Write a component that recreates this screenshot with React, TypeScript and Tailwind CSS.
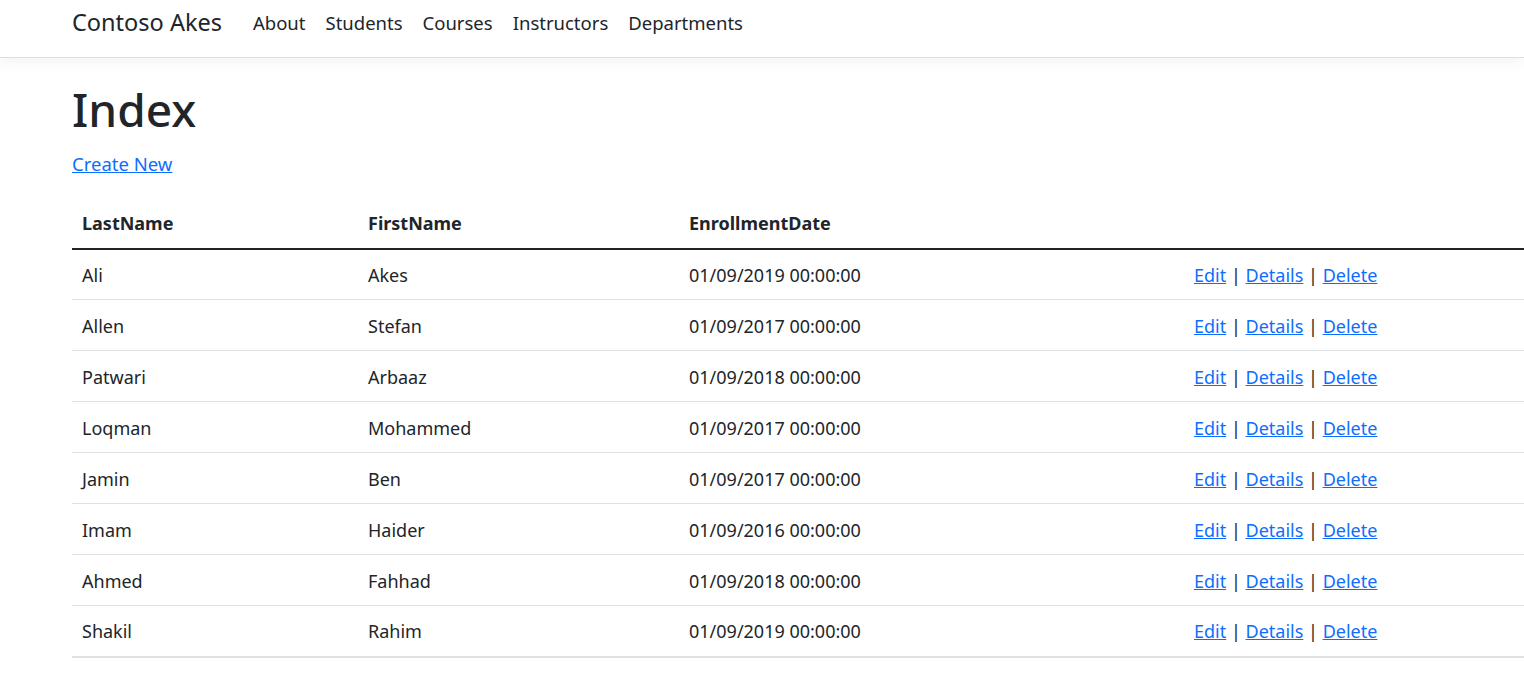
import React from 'react';

const students = [
  { last: 'Ali', first: 'Akes', date: '01/09/2019 00:00:00' },
  { last: 'Allen', first: 'Stefan', date: '01/09/2017 00:00:00' },
  { last: 'Patwari', first: 'Arbaaz', date: '01/09/2018 00:00:00' },
  { last: 'Loqman', first: 'Mohammed', date: '01/09/2017 00:00:00' },
  { last: 'Jamin', first: 'Ben', date: '01/09/2017 00:00:00' },
  { last: 'Imam', first: 'Haider', date: '01/09/2016 00:00:00' },
  { last: 'Ahmed', first: 'Fahhad', date: '01/09/2018 00:00:00' },
  { last: 'Shakil', first: 'Rahim', date: '01/09/2019 00:00:00' },
];

export default function App() {
  return (
    <div className="min-h-screen bg-white text-[#212529] font-['Noto_Sans',sans-serif] overflow-hidden">
      <nav className="h-[58px] border-b border-[#dedede] bg-white shadow-[0_4px_14px_rgba(0,0,0,0.05)]">
        <div className="flex items-center h-[46px] pl-[72px]">
          <a className="text-[23.5px] mr-[31px] leading-none">Contoso Akes</a>
          <ul className="flex gap-[20px] text-[18.5px] leading-none">
            {['About', 'Students', 'Courses', 'Instructors', 'Departments'].map((item) => (
              <li key={item}>
                <a>{item}</a>
              </li>
            ))}
          </ul>
        </div>
      </nav>

      <main className="pl-[72px]">
        <h1 className="text-[46px] font-medium leading-none mt-[28px] mb-[23px]">Index</h1>
        <p className="mb-[26px] leading-none">
          <a className="text-[18.5px] text-[#0d6efd] underline">Create New</a>
        </p>

        <table className="w-[1500px] border-collapse text-[18px]">
          <thead>
            <tr className="border-b-2 border-[#212529]">
              <th className="w-[286px] text-left font-bold pl-[10px] h-[49px]">LastName</th>
              <th className="w-[321px] text-left font-bold pl-[10px]">FirstName</th>
              <th className="w-[505px] text-left font-bold pl-[10px]">EnrollmentDate</th>
              <th></th>
            </tr>
          </thead>
          <tbody>
            {students.map((s, i) => (
              <tr
                key={i}
                className={
                  i === students.length - 1
                    ? 'border-b-2 border-[#dee2e6]'
                    : 'border-b border-[#dee2e6]'
                }
              >
                <td className="pl-[10px] pt-[2px] h-[51px]">{s.last}</td>
                <td className="pl-[10px] pt-[2px]">{s.first}</td>
                <td className="pl-[10px] pt-[2px]">{s.date}</td>
                <td className="pl-[10px] pt-[2px]">
                  <a className="text-[#0d6efd] underline">Edit</a> |{' '}
                  <a className="text-[#0d6efd] underline">Details</a> |{' '}
                  <a className="text-[#0d6efd] underline">Delete</a>
                </td>
              </tr>
            ))}
          </tbody>
        </table>
      </main>
    </div>
  );
}
